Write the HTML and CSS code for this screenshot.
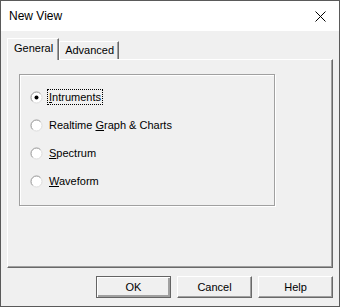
FILE: index.html
```html
<!DOCTYPE html>
<html lang="en">
<head>
    <meta charset="UTF-8">
    <title>New View</title>
    <link rel="stylesheet" href="styles.css">
</head>
<body>
    <div class="window">
        <div class="titlebar">
            <span class="title">New View</span>
            <svg class="close" width="11" height="11" viewBox="0 0 11 11">
                <path d="M0.5 0.5L10.5 10.5M10.5 0.5L0.5 10.5" stroke="#000" stroke-width="1"/>
            </svg>
        </div>

        <div class="dialog">
            <div class="tabs">
                <div class="tab active">General</div>
                <div class="tab">Advanced</div>
            </div>

            <div class="panel">
                <div class="group">
                    <label class="radio">
                        <svg width="13" height="13" viewBox="0 0 13 13">
                            <circle cx="6.5" cy="6.5" r="5.5" fill="#fff" stroke="#dcdcdc"/>
                            <path d="M2.6 10.4A5.5 5.5 0 0 1 10.4 2.6" stroke="#a0a0a0" fill="none"/>
                            <circle cx="6.5" cy="6.5" r="2" fill="#000"/>
                        </svg>
                        <span class="label focus"><u>I</u>ntruments</span>
                    </label>
                    <label class="radio">
                        <svg width="13" height="13" viewBox="0 0 13 13">
                            <circle cx="6.5" cy="6.5" r="5.5" fill="#fff" stroke="#dcdcdc"/>
                            <path d="M2.6 10.4A5.5 5.5 0 0 1 10.4 2.6" stroke="#a0a0a0" fill="none"/>
                        </svg>
                        <span class="label">Realtime <u>G</u>raph &amp; Charts</span>
                    </label>
                    <label class="radio">
                        <svg width="13" height="13" viewBox="0 0 13 13">
                            <circle cx="6.5" cy="6.5" r="5.5" fill="#fff" stroke="#dcdcdc"/>
                            <path d="M2.6 10.4A5.5 5.5 0 0 1 10.4 2.6" stroke="#a0a0a0" fill="none"/>
                        </svg>
                        <span class="label"><u>S</u>pectrum</span>
                    </label>
                    <label class="radio">
                        <svg width="13" height="13" viewBox="0 0 13 13">
                            <circle cx="6.5" cy="6.5" r="5.5" fill="#fff" stroke="#dcdcdc"/>
                            <path d="M2.6 10.4A5.5 5.5 0 0 1 10.4 2.6" stroke="#a0a0a0" fill="none"/>
                        </svg>
                        <span class="label"><u>W</u>aveform</span>
                    </label>
                </div>
            </div>

            <div class="button-row">
                <button class="btn default">OK</button>
                <button class="btn">Cancel</button>
                <button class="btn">Help</button>
            </div>
        </div>
    </div>
</body>
</html>
```

FILE: styles.css
```css
* {
    box-sizing: border-box;
}
body {
    margin: 0;
    font-family: 'Liberation Sans', Arial, sans-serif;
    font-size: 11px;
    color: #000;
    background-color: #f0f0f0;
}
.window {
    width: 340px;
    height: 307px;
    border: 1px solid #5a5a5a;
    background-color: #f0f0f0;
    display: flex;
    flex-direction: column;
}
.titlebar {
    height: 30px;
    background-color: #fff;
    display: flex;
    align-items: center;
    justify-content: space-between;
    padding: 0 10px 0 8px;
}
.title {
    font-size: 12px;
}
.close {
    display: block;
    margin-right: 3px;
}
.dialog {
    flex: 1;
    display: flex;
    flex-direction: column;
    padding: 7px 6px 0 6px;
}
.tabs {
    display: flex;
    align-items: flex-end;
    height: 21px;
}
.tab {
    height: 18px;
    padding: 0 4px 0 5px;
    line-height: 16px;
    border-top: 1px solid #fff;
    border-left: 1px solid #fff;
    border-right: 1px solid #696969;
    box-shadow: inset -1px 0 0 #a0a0a0;
    background-color: #f0f0f0;
}
.tab.active {
    height: 22px;
    margin-bottom: -1px;
    position: relative;
    padding: 0 5px 0 6px;
    line-height: 18px;
}
.panel {
    height: 209px;
    border-top: 1px solid #fff;
    border-left: 1px solid #fff;
    border-right: 1px solid #696969;
    border-bottom: 1px solid #696969;
    box-shadow: inset -1px -1px 0 #a0a0a0;
    padding: 14px 0 0 11px;
}
.group {
    width: 256px;
    height: 132px;
    border: 1px solid #a0a0a0;
    box-shadow: inset 1px 1px 0 #fff, 1px 1px 0 #fff;
    padding: 14px 0 0 10px;
    display: flex;
    flex-direction: column;
    gap: 12px;
}
.radio {
    display: flex;
    align-items: center;
    height: 16px;
    gap: 4px;
}
.radio svg {
    display: block;
}
.label {
    padding: 1px 1px;
    border: 1px dotted transparent;
    line-height: 12px;
}
.label.focus {
    border-color: #000;
}
.button-row {
    display: flex;
    justify-content: flex-end;
    gap: 6px;
    margin-top: 8px;
}
.btn {
    width: 75px;
    height: 22px;
    font-family: 'Liberation Sans', Arial, sans-serif;
    font-size: 11px;
    color: #000;
    background-color: #f0f0f0;
    border-top: 1px solid #fff;
    border-left: 1px solid #fff;
    border-right: 1px solid #696969;
    border-bottom: 1px solid #696969;
    box-shadow: inset -1px -1px 0 #a0a0a0;
    padding: 0;
}
.btn.default {
    border: 1px solid #646464;
    box-shadow: inset 1px 1px 0 #fff, inset -2px -2px 0 #a0a0a0;
}
```
